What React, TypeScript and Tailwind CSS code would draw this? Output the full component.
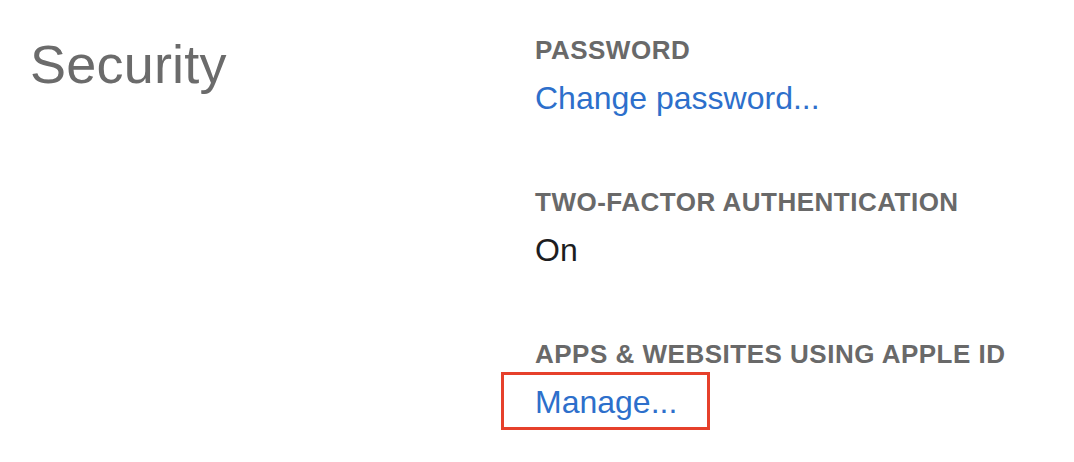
const sections = [
  { label: "PASSWORD", value: "Change password...", link: true },
  { label: "TWO-FACTOR AUTHENTICATION", value: "On", link: false },
  { label: "APPS & WEBSITES USING APPLE ID", value: "Manage...", link: true, marked: true },
];

export default function App() {
  return (
    <div className="w-[1074px] h-[462px] bg-white flex pt-[37px] pl-[30px] font-['Liberation_Sans',Arial,sans-serif]">
      {/* Left heading */}
      <div className="w-[505px] shrink-0">
        <h1 className="text-[54px] leading-[54px] text-[#6b6b6b] tracking-[0.2px]">Security</h1>
      </div>

      {/* Right settings */}
      <div className="flex flex-col gap-[73px]">
        {sections.map((s) => (
          <div key={s.label} className="flex flex-col gap-[19px]">
            <div className="text-[26px] leading-[26px] font-bold text-[#696969] tracking-[0.5px]">{s.label}</div>
            <div>
              {s.link ? (
                <a className="relative inline-block text-[32px] leading-[32px] text-[#2d6fcb] cursor-pointer">
                  {s.value}
                  {s.marked && (
                    <span className="absolute -top-[14px] -bottom-[12px] -left-[34px] -right-[33px] border-[3px] border-[#e6402b]" />
                  )}
                </a>
              ) : (
                <span className="inline-block text-[32px] leading-[32px] text-[#1d1d1f]">{s.value}</span>
              )}
            </div>
          </div>
        ))}
      </div>
    </div>
  );
}
